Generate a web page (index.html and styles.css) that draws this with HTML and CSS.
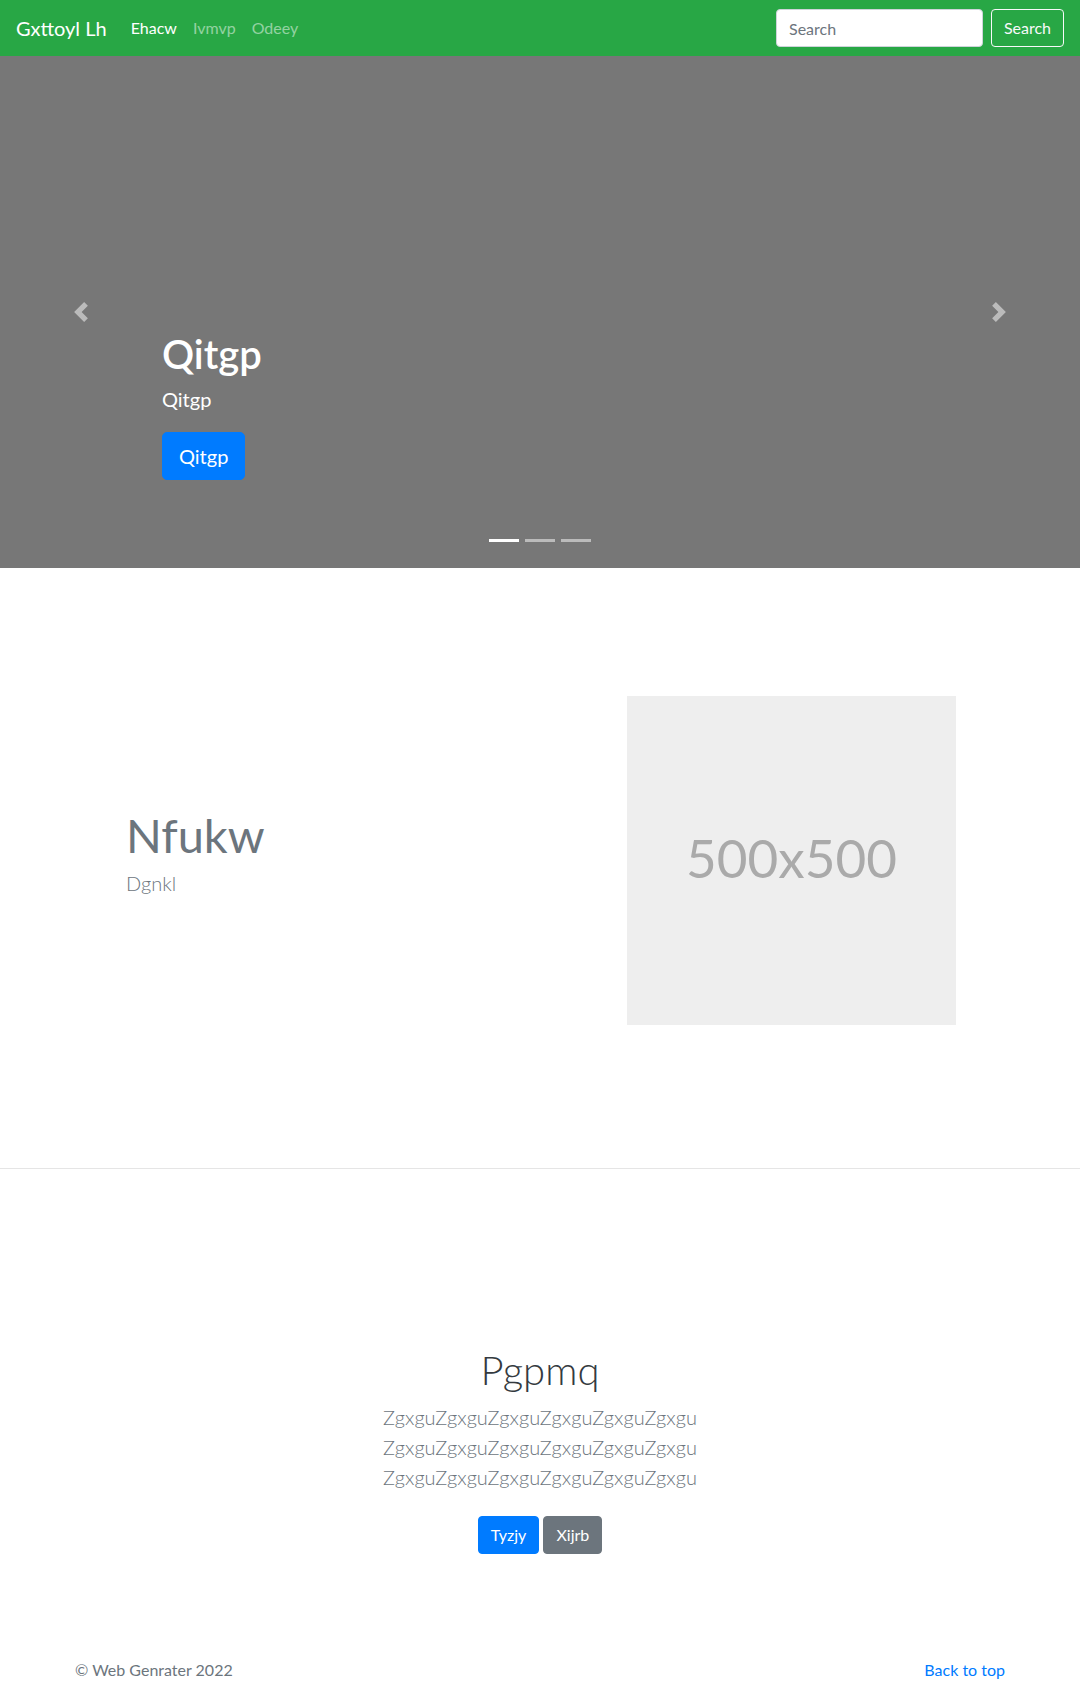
FILE: index.html
```html
<!DOCTYPE html>
<html lang="en">
<head>
<meta charset="utf-8">
<title>Gxttoyl Lh</title>
<link rel="stylesheet" href="styles.css">
</head>
<body>
<header class="navbar">
  <a class="brand" href="#">Gxttoyl Lh</a>
  <ul class="nav">
    <li><a class="nav-link active" href="#">Ehacw</a></li>
    <li><a class="nav-link" href="#">Ivmvp</a></li>
    <li><a class="nav-link" href="#">Odeey</a></li>
  </ul>
  <form class="search">
    <input class="search-input" type="text" placeholder="Search">
    <button class="btn-outline-light" type="button">Search</button>
  </form>
</header>

<div class="carousel">
  <ol class="indicators">
    <li class="active"></li>
    <li></li>
    <li></li>
  </ol>
  <div class="carousel-caption">
    <h1 class="caption-title">Qitgp</h1>
    <p class="caption-text">Qitgp</p>
    <p class="caption-action"><a class="btn btn-lg btn-primary" href="#">Qitgp</a></p>
  </div>
  <a class="control control-prev" href="#">
    <svg width="20" height="20" viewBox="0 0 8 8" fill="#fff"><path d="M5.25 0l-4 4 4 4 1.5-1.5L4.25 4l2.5-2.5L5.25 0z"/></svg>
  </a>
  <a class="control control-next" href="#">
    <svg width="20" height="20" viewBox="0 0 8 8" fill="#fff"><path d="M2.75 0l-1.5 1.5L3.75 4l-2.5 2.5L2.75 8l4-4-4-4z"/></svg>
  </a>
</div>

<section class="featurette">
  <div class="feat-text">
    <h2 class="feat-heading">Nfukw</h2>
    <p class="feat-lead">Dgnkl</p>
  </div>
  <div class="placeholder">500x500</div>
</section>

<hr class="divider">

<section class="jumbotron">
  <h1 class="jumbo-heading">Pgpmq</h1>
  <p class="lead">ZgxguZgxguZgxguZgxguZgxguZgxgu ZgxguZgxguZgxguZgxguZgxguZgxgu ZgxguZgxguZgxguZgxguZgxguZgxgu</p>
  <p class="actions"><a class="btn btn-primary" href="#">Tyzjy</a> <a class="btn btn-secondary" href="#">Xijrb</a></p>
</section>

<footer class="footer">
  <p class="copyright">© Web Genrater 2022</p>
  <p class="back-top"><a href="#">Back to top</a></p>
</footer>
</body>
</html>
```

FILE: styles.css
```css
* { box-sizing: border-box; }

body {
  margin: 0;
  font-family: "Lato", "Open Sans", sans-serif;
  font-size: 16px;
  line-height: 1.5;
  color: #212529;
  background: #fff;
}

a { text-decoration: none; }

/* Navbar */
.navbar {
  height: 56px;
  background: #28a745;
  display: flex;
  align-items: center;
  padding: 0 16px;
}
.brand {
  color: #fff;
  font-size: 20px;
  line-height: 30px;
  margin-right: 16px;
}
.nav {
  display: flex;
  list-style: none;
  margin: 0;
  padding: 0;
  flex: 1;
}
.nav-link {
  display: block;
  padding: 8px;
  color: rgba(255,255,255,.5);
}
.nav-link.active { color: #fff; }

.search {
  display: flex;
  align-items: center;
  gap: 8px;
}
.search-input {
  width: 207px;
  height: 38px;
  padding: 6px 12px;
  font: inherit;
  color: #495057;
  background: #fff;
  border: 1px solid #ced4da;
  border-radius: 4px;
}
.search-input::placeholder { color: #6c757d; }
.btn-outline-light {
  height: 38px;
  width: 73px;
  padding: 6px 0;
  font: inherit;
  color: #f8f9fa;
  background: transparent;
  border: 1px solid #f8f9fa;
  border-radius: 4px;
}

/* Carousel */
.carousel {
  position: relative;
  height: 512px;
  background: #777;
}
.carousel-caption {
  position: absolute;
  left: 15%;
  right: 15%;
  bottom: 88px;
  color: #fff;
}
.caption-title {
  margin: 0 0 8px;
  font-size: 40px;
  font-weight: 600;
  line-height: 1.2;
}
.caption-text {
  margin: 0 0 20px;
  font-size: 20px;
  line-height: 26px;
}
.caption-action { margin: 0; }

.btn {
  display: inline-block;
  color: #fff;
  padding: 6px 12px;
  font-size: 16px;
  line-height: 24px;
  border: 1px solid transparent;
  border-radius: 4px;
  vertical-align: middle;
}
.btn-lg {
  padding: 8px 16px;
  font-size: 20px;
  line-height: 30px;
  border-radius: 5px;
}
.btn-primary { background: #007bff; border-color: #007bff; }
.btn-secondary { background: #6c757d; border-color: #6c757d; }

.indicators {
  position: absolute;
  left: 0;
  right: 0;
  bottom: 26px;
  margin: 0;
  padding: 0;
  list-style: none;
  display: flex;
  justify-content: center;
  gap: 6px;
}
.indicators li {
  width: 30px;
  height: 3px;
  background: rgba(255,255,255,.5);
}
.indicators li.active { background: #fff; }

.control {
  position: absolute;
  top: 0;
  bottom: 0;
  width: 15%;
  display: flex;
  align-items: center;
  justify-content: center;
  opacity: .5;
}
.control-prev { left: 0; }
.control-next { right: 0; }

/* Featurette */
.featurette {
  display: grid;
  grid-template-columns: 1fr 329px;
  align-items: center;
  padding: 128px 124px 143px 126px;
}
.feat-heading {
  margin: 0 0 4px;
  font-size: 47px;
  font-weight: 400;
  line-height: 1.2;
  color: #6c757d;
}
.feat-lead {
  margin: 0 0 16px;
  font-size: 20px;
  font-weight: 300;
  line-height: 30px;
  color: #6c757d;
}
.placeholder {
  width: 329px;
  height: 329px;
  padding-bottom: 6px;
  background: #eee;
  color: #aaa;
  font-size: 53px;
  display: flex;
  align-items: center;
  justify-content: center;
}

.divider {
  margin: 0;
  border: 0;
  border-top: 1px solid rgba(0,0,0,.1);
}

/* Jumbotron */
.jumbotron {
  text-align: center;
  padding: 177px 0 48px;
}
.jumbo-heading {
  margin: 0 0 8px;
  font-size: 40px;
  font-weight: 300;
  line-height: 1.2;
  color: #343a40;
}
.lead {
  max-width: 340px;
  margin: 0 auto 16px;
  font-size: 20px;
  font-weight: 300;
  line-height: 30px;
  color: #6c757d;
}
.actions { margin: 0; }
.actions .btn { margin: 8px 0; }

/* Footer */
.footer {
  display: flex;
  justify-content: space-between;
  max-width: 930px;
  margin: 0 auto;
  padding: 48px 0;
  color: #6c757d;
}
.footer p { margin: 0 0 16px; }
.back-top a { color: #007bff; }
```
